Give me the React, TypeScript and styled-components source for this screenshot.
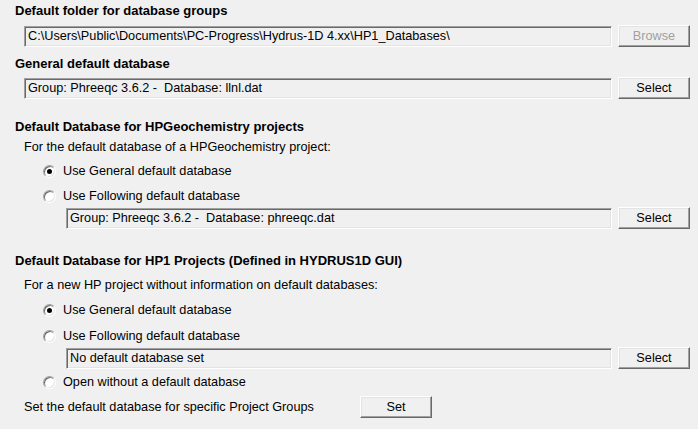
import styled, { createGlobalStyle } from "styled-components";

const GlobalStyle = createGlobalStyle`
  html, body {
    margin: 0;
    padding: 0;
    background: #f0f0f0;
  }
`;

const Page = styled.div`
  width: 698px;
  height: 429px;
  box-sizing: border-box;
  padding: 4px 8px 0 15px;
  background: #f0f0f0;
  font-family: "Liberation Sans", Arial, sans-serif;
  font-size: 12.7px;
  color: #000;
  display: flex;
  flex-direction: column;
`;

const Heading = styled.div<{ $top?: number }>`
  margin-top: ${({ $top }) => $top ?? 0}px;
  font-weight: bold;
  font-size: 13px;
  line-height: 14px;
  white-space: nowrap;
`;

const Note = styled.div<{ $top: number }>`
  margin-top: ${({ $top }) => $top}px;
  padding-left: 9px;
  line-height: 14px;
  white-space: nowrap;
`;

const FieldRow = styled.div<{ $top: number; $indent: number }>`
  margin-top: ${({ $top }) => $top}px;
  padding-left: ${({ $indent }) => $indent}px;
  display: flex;
  align-items: center;
  gap: 6px;
  height: 22px;
`;

const Field = styled.div`
  flex: 1;
  height: 21px;
  box-sizing: border-box;
  border-top: 1px solid #a0a0a0;
  border-left: 1px solid #a0a0a0;
  border-bottom: 1px solid #ffffff;
  border-right: 1px solid #ffffff;
  box-shadow: inset 1px 1px 0 #696969, inset -1px -1px 0 #e3e3e3;
  padding: 0 0 0 3px;
  line-height: 19px;
  white-space: nowrap;
  overflow: hidden;
`;

const Button = styled.div<{ $disabled?: boolean }>`
  width: 72px;
  height: 22px;
  flex: none;
  box-sizing: border-box;
  border-top: 1px solid #ffffff;
  border-left: 1px solid #ffffff;
  border-bottom: 1px solid #696969;
  border-right: 1px solid #696969;
  box-shadow: inset -1px -1px 0 #a0a0a0, inset 1px 1px 0 #e3e3e3;
  display: flex;
  align-items: center;
  justify-content: center;
  color: ${({ $disabled }) => ($disabled ? "#a0a0a0" : "#000")};
`;

const RadioRow = styled.div<{ $top: number }>`
  margin-top: ${({ $top }) => $top}px;
  padding-left: 28px;
  display: flex;
  align-items: center;
  gap: 7px;
  height: 14px;
  white-space: nowrap;
`;

const RadioMark = styled.span<{ $checked?: boolean }>`
  width: 13px;
  height: 13px;
  flex: none;
  box-sizing: border-box;
  border-radius: 50%;
  background: #ffffff;
  border-top: 1px solid #a0a0a0;
  border-left: 1px solid #a0a0a0;
  border-bottom: 1px solid #ffffff;
  border-right: 1px solid #ffffff;
  box-shadow: inset 1px 1px 0 #696969, inset -1px -1px 0 #e3e3e3;
  display: flex;
  align-items: center;
  justify-content: center;

  &::after {
    content: "";
    width: 5px;
    height: 5px;
    border-radius: 50%;
    background: ${({ $checked }) => ($checked ? "#000" : "transparent")};
  }
`;

const SetRow = styled.div`
  margin-top: 7px;
  padding-left: 9px;
  display: grid;
  grid-template-columns: 336px 72px;
  align-items: center;
  height: 22px;
  white-space: nowrap;
`;

const Radio = ({ top, checked, label }: { top: number; checked?: boolean; label: string }) => (
  <RadioRow $top={top}>
    <RadioMark $checked={checked} />
    <span>{label}</span>
  </RadioRow>
);

const App = () => {
  return (
    <>
      <GlobalStyle />
      <Page>
        <Heading>Default folder for database groups</Heading>
        <FieldRow $top={7} $indent={9}>
          <Field>C:\Users\Public\Documents\PC-Progress\Hydrus-1D 4.xx\HP1_Databases\</Field>
          <Button $disabled>Browse</Button>
        </FieldRow>

        <Heading $top={10}>General default database</Heading>
        <FieldRow $top={6} $indent={9}>
          <Field>Group: Phreeqc 3.6.2 -&nbsp; Database: llnl.dat</Field>
          <Button>Select</Button>
        </FieldRow>

        <Heading $top={21}>Default Database for HPGeochemistry projects</Heading>
        <Note $top={6}>For the default database of a HPGeochemistry project:</Note>
        <Radio top={10} checked label="Use General default database" />
        <Radio top={11} label="Use Following default database" />
        <FieldRow $top={4} $indent={51}>
          <Field>Group: Phreeqc 3.6.2 -&nbsp; Database: phreeqc.dat</Field>
          <Button>Select</Button>
        </FieldRow>

        <Heading $top={25}>Default Database for HP1 Projects (Defined in HYDRUS1D GUI)</Heading>
        <Note $top={10}>For a new HP project without information on default databases:</Note>
        <Radio top={11} checked label="Use General default database" />
        <Radio top={12} label="Use Following default database" />
        <FieldRow $top={4} $indent={51}>
          <Field>No default database set</Field>
          <Button>Select</Button>
        </FieldRow>
        <Radio top={6} label="Open without a default database" />
        <SetRow>
          <span>Set the default database for specific Project Groups</span>
          <Button>Set</Button>
        </SetRow>
      </Page>
    </>
  );
};

export default App;
